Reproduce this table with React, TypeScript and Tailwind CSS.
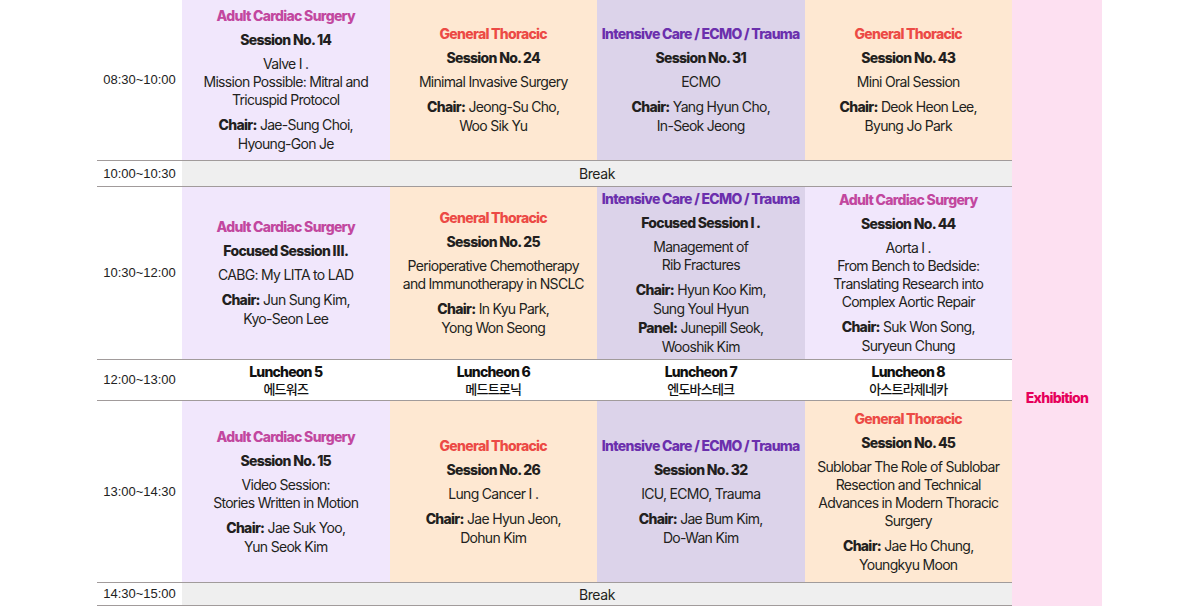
type Track = "cardiac" | "thoracic" | "icu";

type Session = {
  track: Track;
  no: string;
  desc: string[];
  roles: { label: string; names: string[] }[];
};

const trackStyle: Record<Track, { bg: string; color: string; name: string }> = {
  cardiac: { bg: "bg-[#f1e7fc]", color: "text-[#c2479f]", name: "Adult Cardiac Surgery" },
  thoracic: { bg: "bg-[#fee8d2]", color: "text-[#ec4a45]", name: "General Thoracic" },
  icu: { bg: "bg-[#dcd3ea]", color: "text-[#6b2fad]", name: "Intensive Care / ECMO / Trauma" },
};

const morning: Session[] = [
  {
    track: "cardiac",
    no: "Session No. 14",
    desc: ["Valve Ⅰ .", "Mission Possible: Mitral and", "Tricuspid Protocol"],
    roles: [{ label: "Chair:", names: ["Jae-Sung Choi,", "Hyoung-Gon Je"] }],
  },
  {
    track: "thoracic",
    no: "Session No. 24",
    desc: ["Minimal Invasive Surgery"],
    roles: [{ label: "Chair:", names: ["Jeong-Su Cho,", "Woo Sik Yu"] }],
  },
  {
    track: "icu",
    no: "Session No. 31",
    desc: ["ECMO"],
    roles: [{ label: "Chair:", names: ["Yang Hyun Cho,", "In-Seok Jeong"] }],
  },
  {
    track: "thoracic",
    no: "Session No. 43",
    desc: ["Mini Oral Session"],
    roles: [{ label: "Chair:", names: ["Deok Heon Lee,", "Byung Jo Park"] }],
  },
];

const midday: Session[] = [
  {
    track: "cardiac",
    no: "Focused Session Ⅲ.",
    desc: ["CABG: My LITA to LAD"],
    roles: [{ label: "Chair:", names: ["Jun Sung Kim,", "Kyo-Seon Lee"] }],
  },
  {
    track: "thoracic",
    no: "Session No. 25",
    desc: ["Perioperative Chemotherapy", "and Immunotherapy in NSCLC"],
    roles: [{ label: "Chair:", names: ["In Kyu Park,", "Yong Won Seong"] }],
  },
  {
    track: "icu",
    no: "Focused Session Ⅰ .",
    desc: ["Management of", "Rib Fractures"],
    roles: [
      { label: "Chair:", names: ["Hyun Koo Kim,", "Sung Youl Hyun"] },
      { label: "Panel:", names: ["Junepill Seok,", "Wooshik Kim"] },
    ],
  },
  {
    track: "cardiac",
    no: "Session No. 44",
    desc: ["Aorta Ⅰ .", "From Bench to Bedside:", "Translating Research into", "Complex Aortic Repair"],
    roles: [{ label: "Chair:", names: ["Suk Won Song,", "Suryeun Chung"] }],
  },
];

const afternoon: Session[] = [
  {
    track: "cardiac",
    no: "Session No. 15",
    desc: ["Video Session:", "Stories Written in Motion"],
    roles: [{ label: "Chair:", names: ["Jae Suk Yoo,", "Yun Seok Kim"] }],
  },
  {
    track: "thoracic",
    no: "Session No. 26",
    desc: ["Lung Cancer Ⅰ ."],
    roles: [{ label: "Chair:", names: ["Jae Hyun Jeon,", "Dohun Kim"] }],
  },
  {
    track: "icu",
    no: "Session No. 32",
    desc: ["ICU, ECMO, Trauma"],
    roles: [{ label: "Chair:", names: ["Jae Bum Kim,", "Do-Wan Kim"] }],
  },
  {
    track: "thoracic",
    no: "Session No. 45",
    desc: ["Sublobar The Role of Sublobar", "Resection and Technical", "Advances in Modern Thoracic", "Surgery"],
    roles: [{ label: "Chair:", names: ["Jae Ho Chung,", "Youngkyu Moon"] }],
  },
];

const luncheons = [
  { name: "Luncheon 5", sponsor: "에드워즈" },
  { name: "Luncheon 6", sponsor: "메드트로닉" },
  { name: "Luncheon 7", sponsor: "엔도바스테크" },
  { name: "Luncheon 8", sponsor: "아스트라제네카" },
];

const line = "border-b border-[#a19b9b]";

const TimeCell = ({ time }: { time: string }) => (
  <div className={`${line} flex items-center justify-center bg-white text-[13px] text-[#222] font-['Liberation_Sans',sans-serif]`}>
    {time}
  </div>
);

const SessionCell = ({ s }: { s: Session }) => {
  const t = trackStyle[s.track];
  return (
    <div className={`${line} ${t.bg} flex flex-col items-center justify-center text-center text-[14px] text-[#231f20] tracking-[-0.05em]`}>
      <div className={`${t.color} font-extrabold leading-[18px]`}>{t.name}</div>
      <div className="mt-[6px] font-extrabold leading-[18px]">{s.no}</div>
      <div className="mt-[6px] leading-[18px]">
        {s.desc.map((d) => (
          <div key={d}>{d}</div>
        ))}
      </div>
      <div className="mt-[6px] leading-[19px]">
        {s.roles.map((r) => (
          <div key={r.label}>
            <div>
              <span className="font-extrabold">{r.label}</span> {r.names[0]}
            </div>
            <div>{r.names[1]}</div>
          </div>
        ))}
      </div>
    </div>
  );
};

const BreakRow = ({ time }: { time: string }) => (
  <>
    <TimeCell time={time} />
    <div className={`${line} col-span-4 flex items-center justify-center bg-[#efefef] text-[14px] text-[#231f20] tracking-[-0.03em]`}>
      Break
    </div>
  </>
);

export default function App() {
  return (
    <div className="w-[1200px] h-[606px] overflow-hidden bg-white font-['Inter','Noto_Sans_CJK_KR',sans-serif]">
      <div className="ml-[97px] w-[1005px] grid grid-cols-[85px_repeat(4,minmax(0,1fr))_90px] grid-rows-[161px_26px_173px_41px_182px_23px]">
        <TimeCell time="08:30~10:00" />
        {morning.map((s) => (
          <SessionCell key={s.no} s={s} />
        ))}
        <div className="row-span-6 col-start-6 row-start-1 bg-[#fde0f1] flex justify-center pt-[388px]">
          <span className="font-extrabold text-[14px] text-[#e6005c] tracking-[-0.05em] leading-[20px]">Exhibition</span>
        </div>

        <BreakRow time="10:00~10:30" />

        <TimeCell time="10:30~12:00" />
        {midday.map((s) => (
          <SessionCell key={s.no} s={s} />
        ))}

        <TimeCell time="12:00~13:00" />
        {luncheons.map((l) => (
          <div key={l.name} className={`${line} flex flex-col items-center justify-center bg-white text-[#111] tracking-[-0.05em]`}>
            <div className="font-extrabold text-[14px] leading-[16px]">{l.name}</div>
            <div className="text-[13px] leading-[17px] font-medium font-['Noto_Sans_CJK_KR',sans-serif]">{l.sponsor}</div>
          </div>
        ))}

        <TimeCell time="13:00~14:30" />
        {afternoon.map((s) => (
          <SessionCell key={s.no} s={s} />
        ))}

        <BreakRow time="14:30~15:00" />
      </div>
    </div>
  );
}
